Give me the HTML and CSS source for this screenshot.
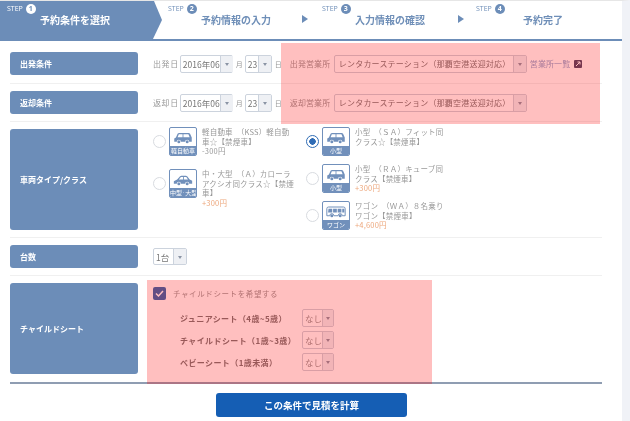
FILE: index.html
```html
<!DOCTYPE html>
<html lang="ja">
<head>
    <meta charset="UTF-8">
    <title>予約条件を選択</title>
    <link rel="stylesheet" href="styles.css">
</head>
<body>
    <svg class="defs" width="0" height="0">
        <symbol id="car-small" viewBox="0 0 24 14">
            <path d="M1.500 11.500V7.500L3.500 6.500 5.500 2Q6 1 7.500 1H18.500Q20 1 20.500 2L22.500 6.500V11.500H19.500A2.500 2.500 0 0 0 14.500 11.500H9.500A2.500 2.500 0 0 0 4.500 11.500Z" fill="#7190bb"/>
            <path d="M7 2.500H11.500V6H5.500ZM12.500 2.500H18.500L20 6H12.500Z" fill="#fff"/>
            <circle cx="7" cy="11.500" r="1.800" fill="#7190bb"/>
            <circle cx="17" cy="11.500" r="1.800" fill="#7190bb"/>
        </symbol>
        <symbol id="car-sedan" viewBox="0 0 24 14">
            <path d="M1 11.500V8.500L5 6.500 8.500 2.500Q9 2 10 2H15.500Q16.500 2 17 2.500L20 6.500 23 8V11.500H19.500A2.500 2.500 0 0 0 14.500 11.500H9.500A2.500 2.500 0 0 0 4.500 11.500Z" fill="#7190bb"/>
            <path d="M9.500 3.500H12V6.500H7ZM13 3.500H16L18 6.500H13Z" fill="#fff"/>
            <circle cx="7" cy="11.500" r="1.800" fill="#7190bb"/>
            <circle cx="17" cy="11.500" r="1.800" fill="#7190bb"/>
        </symbol>
        <symbol id="car-wagon" viewBox="0 0 24 14">
            <path d="M3 1H21Q23 1 23 3V11.500H19.500A2.500 2.500 0 0 0 14.500 11.500H9.500A2.500 2.500 0 0 0 4.500 11.500H1V3Q1 1 3 1Z" fill="#fff" stroke="#7190bb" stroke-width="1.200"/>
            <path d="M3 3H7.500V7.500H2.500ZM8.500 3H13V7.500H8.500ZM14 3H18.500V7.500H14ZM19.500 3H22V7.500H19.500Z" fill="#7190bb"/>
            <circle cx="7" cy="11.500" r="1.800" fill="#7190bb"/>
            <circle cx="17" cy="11.500" r="1.800" fill="#7190bb"/>
        </symbol>
    </svg>

    <div class="page">
        <nav class="steps">
            <div class="step step-active">
                <div class="step-label">STEP <span class="step-num">1</span></div>
                <div class="step-title">予約条件を選択</div>
            </div>
            <div class="step step-second">
                <div class="step-label">STEP <span class="step-num">2</span></div>
                <div class="step-title">予約情報の入力</div>
            </div>
            <div class="step step-arrow">
                <div class="step-label">STEP <span class="step-num">3</span></div>
                <div class="step-title">入力情報の確認</div>
            </div>
            <div class="step step-arrow step-last">
                <div class="step-label">STEP <span class="step-num">4</span></div>
                <div class="step-title">予約完了</div>
            </div>
        </nav>

        <form class="form">
            <div class="row row-first">
                <div class="row-label">出発条件</div>
                <div class="row-body fields">
                    <span class="field-name">出発日</span>
                    <span class="select date-year"><span class="select-text">2016年06</span><span class="select-btn"></span></span>
                    <span class="field-unit">月</span>
                    <span class="select date-day"><span class="select-text">23</span><span class="select-btn"></span></span>
                    <span class="field-unit">日</span>
                    <span class="field-name office-name">出発営業所</span>
                    <span class="select office"><span class="select-text">レンタカーステーション（那覇空港送迎対応）</span><span class="select-btn"></span></span>
                    <a class="office-link">営業所一覧</a>
                    <svg class="ext-icon" width="8" height="8" viewBox="0 0 8 8"><rect width="8" height="8" rx="1" fill="#4a4a6a"/><path d="M2 6 6 2M3.500 2H6V4.500" stroke="#fff" fill="none"/></svg>
                </div>
            </div>
            <div class="row">
                <div class="row-label">返却条件</div>
                <div class="row-body fields">
                    <span class="field-name">返却日</span>
                    <span class="select date-year"><span class="select-text">2016年06</span><span class="select-btn"></span></span>
                    <span class="field-unit">月</span>
                    <span class="select date-day"><span class="select-text">23</span><span class="select-btn"></span></span>
                    <span class="field-unit">日</span>
                    <span class="field-name office-name">返却営業所</span>
                    <span class="select office"><span class="select-text">レンタカーステーション（那覇空港送迎対応）</span><span class="select-btn"></span></span>
                </div>
            </div>
            <div class="row row-cars">
                <div class="row-label">車両タイプ/クラス</div>
                <div class="row-body cars">
                    <div class="cars-col">
                        <div class="car">
                            <span class="radio"></span>
                            <span class="car-icon"><svg width="20" height="12"><use href="#car-small"/></svg><span class="car-tag">軽自動車</span></span>
                            <div class="car-text">軽自動車　（KSS）軽自動車☆【禁煙車】<span class="car-price">-300円</span></div>
                        </div>
                        <div class="car car-gap-wide">
                            <span class="radio"></span>
                            <span class="car-icon"><svg width="20" height="12"><use href="#car-sedan"/></svg><span class="car-tag">中型·大型</span></span>
                            <div class="car-text">中・大型　（Ａ）カローラアクシオ同クラス☆【禁煙車】<span class="car-price price-up">+300円</span></div>
                        </div>
                    </div>
                    <div class="cars-col">
                        <div class="car">
                            <span class="radio radio-on"></span>
                            <span class="car-icon"><svg width="20" height="12"><use href="#car-small"/></svg><span class="car-tag">小型</span></span>
                            <div class="car-text">小型　（ＳＡ）フィット同クラス☆【禁煙車】</div>
                        </div>
                        <div class="car car-gap">
                            <span class="radio"></span>
                            <span class="car-icon"><svg width="20" height="12"><use href="#car-small"/></svg><span class="car-tag">小型</span></span>
                            <div class="car-text">小型　（ＲＡ）キューブ同クラス【禁煙車】<span class="car-price price-up">+300円</span></div>
                        </div>
                        <div class="car car-gap">
                            <span class="radio"></span>
                            <span class="car-icon"><svg width="20" height="12"><use href="#car-wagon"/></svg><span class="car-tag">ワゴン</span></span>
                            <div class="car-text">ワゴン　（ＷＡ）８名乗りワゴン【禁煙車】<span class="car-price price-up">+4,600円</span></div>
                        </div>
                    </div>
                </div>
            </div>
            <div class="row">
                <div class="row-label">台数</div>
                <div class="row-body fields">
                    <span class="select count"><span class="select-text">1台</span><span class="select-btn"></span></span>
                </div>
            </div>
            <div class="row row-child">
                <div class="row-label">チャイルドシート</div>
                <div class="row-body child">
                    <div class="child-check">
                        <svg class="checkbox" width="13" height="13" viewBox="0 0 13 13"><rect width="13" height="13" rx="2" fill="#2e69b0"/><path d="M3 6.500 5.500 9 10 4" stroke="#fff" stroke-width="1.500" fill="none"/></svg>
                        <span>チャイルドシートを希望する</span>
                    </div>
                    <div class="seat">
                        <span class="seat-name">ジュニアシート（4歳~5歳）</span>
                        <span class="select seat-select"><span class="select-text">なし</span><span class="select-btn"></span></span>
                    </div>
                    <div class="seat">
                        <span class="seat-name">チャイルドシート（1歳~3歳）</span>
                        <span class="select seat-select"><span class="select-text">なし</span><span class="select-btn"></span></span>
                    </div>
                    <div class="seat">
                        <span class="seat-name">ベビーシート（1歳未満）</span>
                        <span class="select seat-select"><span class="select-text">なし</span><span class="select-btn"></span></span>
                    </div>
                </div>
            </div>
            <div class="submit-wrap">
                <button type="button" class="submit">この条件で見積を計算</button>
            </div>
        </form>

        <div class="mark mark-office"></div>
        <div class="mark mark-child"></div>
    </div>
</body>
</html>
```

FILE: styles.css
```css
* {
    box-sizing: border-box;
}
html, body {
    margin: 0;
    padding: 0;
    height: 421px;
    overflow: hidden;
}
body {
    font-family: "Noto Sans CJK JP", "Noto Sans", sans-serif;
    background: #fff;
    color: #999;
}
.defs {
    display: block;
    height: 0;
}
.page {
    position: relative;
    width: 630px;
    height: 421px;
    background: #fff;
    border-right: 8px solid #f0f2f7;
    border-top: 1px solid #e6e6e6;
    overflow: hidden;
    filter: blur(0.4px);
}

/* steps */
.steps {
    display: flex;
    height: 40px;
    border-bottom: 2px solid #6c8db8;
}
.step {
    position: relative;
    flex: none;
    width: 154px;
    padding-top: 2px;
    color: #6f8fb8;
}
.step-active {
    width: 162px;
    padding-left: 7px;
    height: 40px;
    color: #fff;
    background: #6c8db8;
    clip-path: polygon(0 0, 154px 0, 162px 19px, 152px 40px, 0 40px);
}
.step-second {
    width: 160px;
    padding-left: 6px;
}
.step-arrow::before {
    content: "";
    position: absolute;
    left: -20px;
    top: 14px;
    border-left: 6px solid #6c8db8;
    border-top: 4px solid transparent;
    border-bottom: 4px solid transparent;
}
.step-last::before {
    left: -18px;
}
.step-label {
    display: flex;
    align-items: center;
    gap: 3px;
    height: 11px;
    font-family: "Open Sans", sans-serif;
    font-size: 7px;
    color: #6f8fb8;
}
.step-active .step-label {
    color: #fff;
}
.step-num {
    display: inline-block;
    width: 10px;
    height: 10px;
    border-radius: 50%;
    background: #6c8db8;
    color: #fff;
    font-size: 7px;
    font-weight: 700;
    line-height: 10px;
    text-align: center;
}
.step-active .step-num {
    background: #fff;
    color: #6c8db8;
}
.step-title {
    width: 136px;
    margin-top: -1px;
    font-size: 10px;
    font-weight: 700;
    line-height: 14px;
    text-align: center;
}
.step-last .step-title {
    width: 134px;
}

/* form rows */
.form {
    padding: 11px 10px 0;
    width: 612px;
}
.row {
    display: flex;
    padding-bottom: 7px;
    margin-bottom: 7px;
    border-bottom: 1px solid #f0f0f0;
}
.row-first {
    padding-bottom: 8px;
}
.row-label {
    display: flex;
    align-items: center;
    flex: none;
    width: 128px;
    height: 23px;
    padding-left: 10px;
    border-radius: 3px;
    background: #6c8db8;
    color: #fff;
    font-size: 8px;
    font-weight: 700;
}
.row-cars .row-label {
    height: 101px;
}
.row-child {
    margin-bottom: 9px;
    border-bottom: 2px solid #8f9db2;
}
.row-child .row-label {
    height: 91px;
}
.row-body {
    flex: 1;
    padding-left: 15px;
}
.fields {
    display: flex;
    align-items: center;
    font-size: 8px;
    height: 23px;
}
.field-name {
    margin-right: 1px;
    letter-spacing: 0.6px;
}
.field-unit {
    margin: 0 2px 0 3px;
    font-size: 7px;
}
.office-name {
    margin-left: 6px;
    margin-right: 2px;
    width: 42px;
    letter-spacing: 0.1px;
    white-space: nowrap;
}
.select {
    display: flex;
    align-items: stretch;
    height: 18px;
    border: 1px solid #ccd3dd;
    border-radius: 2px;
    background: #fff;
    color: #777;
    font-size: 8.500px;
    line-height: 16px;
}
.select-text {
    flex: 1;
    padding-left: 2px;
    white-space: nowrap;
}
.select-btn {
    position: relative;
    flex: none;
    width: 13px;
    border-left: 1px solid #ccd3dd;
    background: #eef0f4;
}
.select-btn::after {
    content: "";
    position: absolute;
    left: 4px;
    top: 7px;
    border-top: 3px solid #8a94a4;
    border-left: 2px solid transparent;
    border-right: 2px solid transparent;
}
.date-year {
    width: 53px;
}
.date-day {
    width: 27px;
}
.office {
    width: 193px;
}
.office .select-text {
    padding-left: 4px;
    font-size: 8px;
    letter-spacing: 0.2px;
}
.office-link {
    margin-left: 3px;
    color: #8fa6d0;
    font-size: 8px;
    letter-spacing: 0.1px;
}
.ext-icon {
    margin-left: 4px;
}
.count {
    width: 34px;
    height: 17px;
}

/* car classes */
.cars {
    display: flex;
    padding-left: 15px;
    margin-top: -2px;
}
.cars-col {
    width: 153px;
}
.car {
    display: flex;
    align-items: center;
    height: 29px;
}
.car-gap {
    margin-top: 8px;
}
.car-gap-wide {
    margin-top: 13px;
}
.radio {
    flex: none;
    width: 13px;
    height: 13px;
    margin-right: 3px;
    border: 1.500px solid #d8dbe0;
    border-radius: 50%;
    background: #fff;
}
.radio-on {
    border: 1.500px solid #2f6cb5;
    background: radial-gradient(circle, #2f6cb5 3px, #fff 3.500px);
}
.car-icon {
    display: flex;
    flex-direction: column;
    align-items: center;
    flex: none;
    width: 28px;
    height: 29px;
    padding-top: 4px;
    border: 1px solid #7190bb;
    border-radius: 2px;
    overflow: hidden;
}
.car-tag {
    width: 100%;
    margin-top: auto;
    padding: 1px 0;
    background: #7190bb;
    color: #fff;
    font-size: 6px;
    line-height: 7px;
    text-align: center;
    white-space: nowrap;
}
.car-text {
    align-self: flex-start;
    width: 94px;
    margin-left: 5px;
    font-size: 7.500px;
    line-height: 9.500px;
    letter-spacing: 0.2px;
}
.car-price {
    display: block;
    color: #999;
}
.price-up {
    color: #eda77c;
}

/* child seat */
.child {
    padding-left: 15px;
}
.child-check {
    display: flex;
    align-items: center;
    gap: 7px;
    height: 13px;
    margin-top: 4px;
    margin-bottom: 9px;
    font-size: 7.500px;
    letter-spacing: 0.6px;
}
.seat {
    display: flex;
    align-items: center;
    margin-bottom: 4px;
    padding-left: 27px;
}
.seat-name {
    width: 122px;
    color: #777;
    font-size: 8px;
    font-weight: 700;
    letter-spacing: 0.4px;
    white-space: nowrap;
}
.seat-select {
    width: 32px;
    height: 18px;
    color: #999;
}
.seat-select .select-btn {
    width: 11px;
}
.seat-select .select-btn::after {
    left: 3px;
}

/* submit */
.submit-wrap {
    display: flex;
    padding-left: 206px;
}
.submit {
    width: 191px;
    height: 24px;
    border: 0;
    border-radius: 3px;
    background: #155eb4;
    color: #fff;
    font-family: inherit;
    font-size: 9.500px;
    font-weight: 700;
}

/* red review marks laid over the form */
.mark {
    position: absolute;
    background: rgba(255, 0, 0, 0.25);
}
.mark-office {
    left: 281px;
    top: 42px;
    width: 319px;
    height: 81px;
}
.mark-child {
    left: 147px;
    top: 279px;
    width: 285px;
    height: 104px;
}
```
